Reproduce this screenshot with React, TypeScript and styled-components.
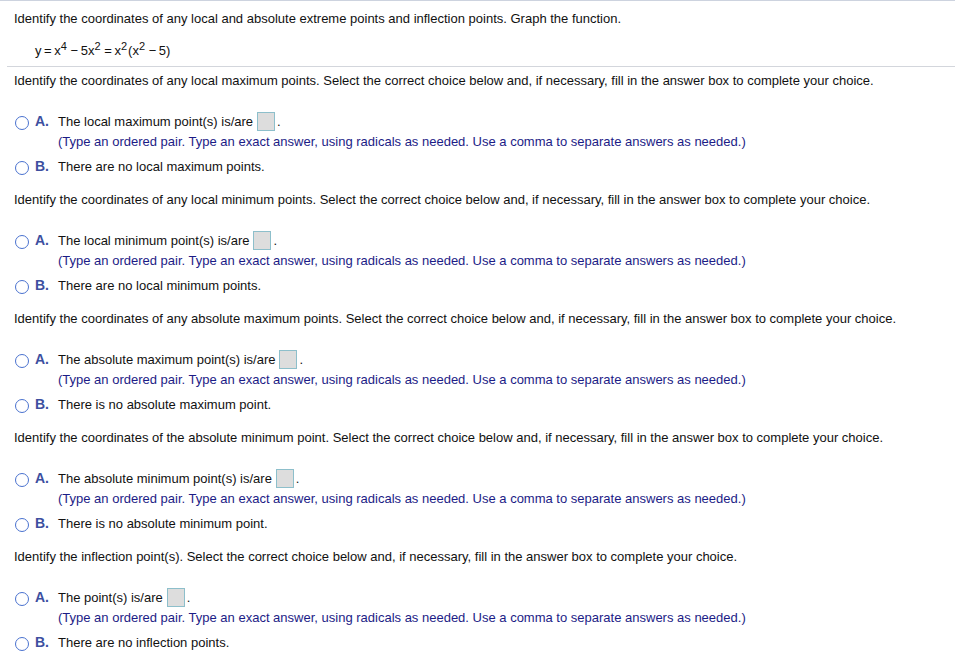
import React from "react";
import styled, { createGlobalStyle } from "styled-components";

const GlobalStyle = createGlobalStyle`
  html, body {
    margin: 0;
    padding: 0;
    background: #ffffff;
  }
  body {
    font-family: "Liberation Sans", Arial, sans-serif;
    font-size: 13px;
    color: #111111;
  }
`;

const Page = styled.div`
  border-top: 1px solid #cdd3df;
  padding-left: 7px;
  width: 948px;
`;

const Header = styled.div`
  margin-top: 8px;
  padding-left: 7px;
  line-height: 20px;
  white-space: nowrap;
`;

const Equation = styled.div`
  margin-top: 12px;
  padding-left: 28px;
  line-height: 20px;
  white-space: nowrap;
  word-spacing: -1px;
`;

const Sup = styled.sup`
  font-size: 11px;
  line-height: 0;
  vertical-align: 5px;
  margin-right: 1px;
`;

const Separator = styled.div`
  margin-top: 5px;
  border-top: 1px solid #d3d6dc;
`;

const Section = styled.div<{ $first?: boolean }>`
  margin-top: ${(p) => (p.$first ? 4 : 13)}px;
`;

const Question = styled.div`
  padding-left: 7px;
  line-height: 20px;
  white-space: nowrap;
`;

const Options = styled.div`
  margin-top: 21px;
  display: flex;
  flex-direction: column;
  gap: 5px;
`;

const Option = styled.div`
  display: flex;
  align-items: flex-start;
  padding-left: 8px;
`;

const Radio = styled.span`
  flex: none;
  box-sizing: border-box;
  width: 14px;
  height: 14px;
  margin-top: 4px;
  border: 1.5px solid #4a72cf;
  border-radius: 50%;
  background: #ffffff;
`;

const Letter = styled.span`
  flex: none;
  width: 23px;
  margin-left: 6px;
  line-height: 20px;
  font-size: 14px;
  font-weight: bold;
  color: #3d4f9f;
  position: relative;
  top: -1px;
`;

const Body = styled.div`
  display: flex;
  flex-direction: column;
`;

const Line = styled.div`
  line-height: 20px;
  white-space: nowrap;
`;

const Hint = styled(Line)`
  color: #1c1c86;
`;

const AnswerBox = styled.span`
  display: inline-block;
  box-sizing: border-box;
  width: 18px;
  height: 19px;
  margin-left: 4px;
  margin-right: 2px;
  vertical-align: -5px;
  background: #dddddd;
  border: 1px solid #8dbfcb;
`;

type Item = { question: string; a: string; b: string };

const items: Item[] = [
  {
    question:
      "Identify the coordinates of any local maximum points. Select the correct choice below and, if necessary, fill in the answer box to complete your choice.",
    a: "The local maximum point(s) is/are",
    b: "There are no local maximum points.",
  },
  {
    question:
      "Identify the coordinates of any local minimum points. Select the correct choice below and, if necessary, fill in the answer box to complete your choice.",
    a: "The local minimum point(s) is/are",
    b: "There are no local minimum points.",
  },
  {
    question:
      "Identify the coordinates of any absolute maximum points. Select the correct choice below and, if necessary, fill in the answer box to complete your choice.",
    a: "The absolute maximum point(s) is/are",
    b: "There is no absolute maximum point.",
  },
  {
    question:
      "Identify the coordinates of the absolute minimum point. Select the correct choice below and, if necessary, fill in the answer box to complete your choice.",
    a: "The absolute minimum point(s) is/are",
    b: "There is no absolute minimum point.",
  },
  {
    question:
      "Identify the inflection point(s). Select the correct choice below and, if necessary, fill in the answer box to complete your choice.",
    a: "The point(s) is/are",
    b: "There are no inflection points.",
  },
];

const HINT =
  "(Type an ordered pair. Type an exact answer, using radicals as needed. Use a comma to separate answers as needed.)";

export default function App() {
  return (
    <>
      <GlobalStyle />
      <Page>
        <Header>
          Identify the coordinates of any local and absolute extreme points and inflection points. Graph the function.
        </Header>
        <Equation>
          y = x<Sup>4</Sup> − 5x<Sup>2</Sup> = x<Sup>2</Sup>(x<Sup>2</Sup> − 5)
        </Equation>
        <Separator />
        {items.map((it, i) => (
          <Section key={i} $first={i === 0}>
            <Question>{it.question}</Question>
            <Options>
              <Option>
                <Radio />
                <Letter>A.</Letter>
                <Body>
                  <Line>
                    {it.a}
                    <AnswerBox />.
                  </Line>
                  <Hint>{HINT}</Hint>
                </Body>
              </Option>
              <Option>
                <Radio />
                <Letter>B.</Letter>
                <Body>
                  <Line>{it.b}</Line>
                </Body>
              </Option>
            </Options>
          </Section>
        ))}
      </Page>
    </>
  );
}
